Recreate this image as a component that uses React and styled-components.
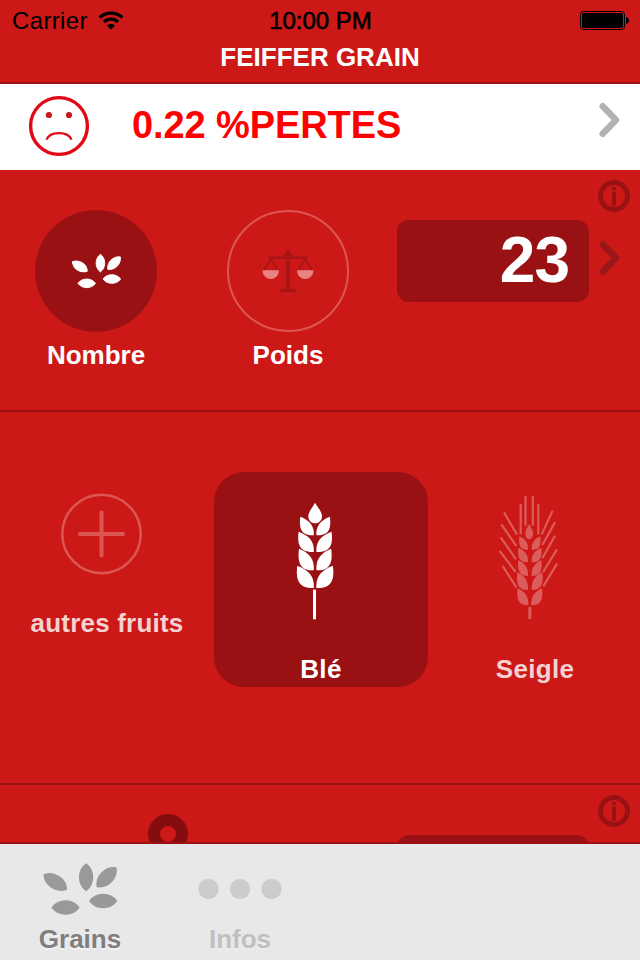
import React from "react";
import styled, { createGlobalStyle } from "styled-components";

const RED = "#cc1917";
const DARK = "#9a1113";

const GlobalStyle = createGlobalStyle`
  *, *::before, *::after { box-sizing: border-box; }
  body { margin: 0; background: ${RED}; }
  svg { display: block; flex: none; }
`;

const Screen = styled.div`
  width: 640px;
  height: 960px;
  overflow: hidden;
  display: flex;
  flex-direction: column;
  background: ${RED};
  font-family: "Liberation Sans", Arial, sans-serif;
  color: #fff;
`;

const Header = styled.header`
  flex: none;
  height: 84px;
  border-bottom: 2px solid ${DARK};
`;

const StatusBar = styled.div`
  display: grid;
  grid-template-columns: 1fr auto 1fr;
  height: 41px;
  padding: 0 11px 0 12px;
  align-items: center;
  line-height: 41px;
  font-size: 24px;
  color: #000;
`;

const Carrier = styled.div`
  display: flex;
  align-items: center;
  gap: 10px;
  letter-spacing: 0.35px;
`;

const Clock = styled.div`
  -webkit-text-stroke: 0.6px #000;
`;

const BatterySlot = styled.div`
  display: flex;
  justify-content: flex-end;
`;

const Title = styled.h1`
  margin: 0;
  font-size: 26px;
  line-height: 32px;
  font-weight: bold;
  text-align: center;
`;

const Banner = styled.section`
  flex: none;
  display: flex;
  align-items: center;
  height: 86px;
  padding: 0 20px 2px 28px;
  background: #fff;
`;

const LossText = styled.div`
  flex: 1;
  margin-left: 42px;
  padding-bottom: 2px;
  color: #fe0000;
  font-size: 38px;
  font-weight: bold;
  line-height: 80px;
  letter-spacing: -0.1px;
  white-space: nowrap;
`;

const ChevronSlot = styled.div`
  margin-bottom: ${(p) => p.$bottom || 0}px;
  margin-left: ${(p) => p.$left || 0}px;
`;

const Section = styled.section`
  flex: none;
  display: flex;
  justify-content: space-between;
  height: ${(p) => p.$height}px;
  padding: 10px 10px 0 35px;
  overflow: hidden;
  border-bottom: ${(p) => (p.$last ? "none" : `2px solid ${DARK}`)};
`;

const Choices = styled.div`
  display: flex;
  gap: 70px;
  margin-top: 30px;
`;

const Choice = styled.div`
  width: 122px;
  display: flex;
  flex-direction: column;
  align-items: center;
`;

const Disc = styled.div`
  width: 122px;
  height: 122px;
  flex: none;
  display: flex;
  align-items: center;
  justify-content: center;
  border-radius: 50%;
  background: ${(p) => (p.$selected ? DARK : "transparent")};
  border: ${(p) => (p.$selected ? "none" : "2px solid #db5755")};
`;

const Label = styled.div`
  font-size: 26px;
  font-weight: bold;
  line-height: 30px;
  white-space: nowrap;
  letter-spacing: ${(p) => p.$spacing || 0}px;
  color: ${(p) => p.$color || "#fff"};
  text-shadow: ${(p) => p.$shadow || "none"};
`;

const ChoiceLabel = styled(Label)`
  margin-top: 8px;
`;

const Entry = styled.div`
  display: grid;
  grid-template-columns: 192px 32px;
  grid-template-rows: 32px 82px;
  gap: 8px 9px;
  align-items: center;
`;

const InfoSlot = styled.div`
  grid-column: 2;
`;

const Field = styled.div`
  grid-column: 1;
  height: 82px;
  padding-right: 20px;
  border-radius: 12px;
  background: ${DARK};
  text-align: right;
  font-size: 64px;
  font-weight: bold;
  line-height: 81px;
  letter-spacing: -1px;
`;

const Carousel = styled.section`
  flex: none;
  height: 373px;
  padding-top: 60px;
  display: grid;
  grid-template-columns: repeat(3, 214px);
  overflow: hidden;
  border-bottom: 2px solid ${DARK};
`;

const Fruit = styled.div`
  height: 215px;
  padding-top: ${(p) => p.$top}px;
  display: flex;
  flex-direction: column;
  align-items: center;
  border-radius: 30px;
  background: ${(p) => (p.$selected ? DARK : "transparent")};
  svg { margin-right: 12px; }
`;

const FruitLabel = styled(Label)`
  margin-top: ${(p) => p.$gap}px;
`;

const PinSlot = styled.div`
  margin: 19px 0 0 113px;
`;

const TabBar = styled.nav`
  flex: none;
  display: flex;
  height: 118px;
  background: #e8e8e8;
  border-top: 2px solid ${DARK};
`;

const Tab = styled.div`
  width: 160px;
  padding-top: 18px;
  display: flex;
  flex-direction: column;
  align-items: center;
`;

const TabIcon = styled.div`
  height: 54px;
  display: flex;
  align-items: center;
`;

const TabLabel = styled(Label)`
  margin-top: 8px;
`;

const SEED = "M-13.2 0C-7 -8.6 7 -8.6 13.2 0C7 8.6 -7 8.6 -13.2 0Z";

function Seeds({ color, scale = 1 }) {
  const seeds = [
    [13.3, 20, 32],
    [44.1, 15.2, 90],
    [64.6, 15.2, -45],
    [23.6, 45.5, 0],
    [61.2, 39, 0],
  ];
  return (
    <svg width={76 * scale} height={54 * scale} viewBox="0 0 76 54" fill={color} stroke={color} strokeWidth="1.4" strokeLinejoin="round">
      {seeds.map(([x, y, r]) => (
        <path key={x} d={SEED} transform={`translate(${x} ${y}) rotate(${r})`} />
      ))}
    </svg>
  );
}

function Wifi() {
  return (
    <svg width="26" height="20" viewBox="0 0 26 20" fill="none" stroke="#000" strokeWidth="3.4">
      <path d="M1.6 6.6C8 .6 18 .6 24.4 6.6" />
      <path d="M6 11C10 7.200 16 7.200 20 11" />
      <path d="M13 18.800L8.900 14.600C11.200 12.300 14.800 12.300 17.100 14.600Z" fill="#000" stroke="none" />
    </svg>
  );
}

function Battery() {
  return (
    <svg width="49" height="19" viewBox="0 0 49 19">
      <rect x=".5" y=".5" width="44" height="18" rx="3" fill="none" stroke="#000" />
      <rect x="2" y="2" width="41" height="15" rx="1.800" />
      <path d="M46 6C50 6.500 50 12.500 46 13Z" />
    </svg>
  );
}

function SadFace() {
  return (
    <svg width="62" height="62" viewBox="0 0 62 62" fill="none" stroke="#e20714">
      <circle cx="31" cy="31" r="28.400" strokeWidth="3.400" />
      <circle cx="20.900" cy="20" r="3.100" fill="#c41a20" stroke="none" />
      <circle cx="41" cy="20" r="3.100" fill="#c41a20" stroke="none" />
      <path d="M18.500 44.600C22 35.900 40 35.900 43.500 44.600" strokeWidth="2.400" />
    </svg>
  );
}

function Chevron({ color }) {
  return (
    <svg width="21" height="36" viewBox="0 0 21 36" fill="none" stroke={color} strokeWidth="6.500" strokeLinecap="round" strokeLinejoin="round">
      <path d="M3.700 4.300L17 18L3.700 31.700" />
    </svg>
  );
}

function Info() {
  return (
    <svg width="32" height="32" viewBox="0 0 32 32" fill={DARK}>
      <circle cx="16" cy="16" r="13.500" fill="none" stroke={DARK} strokeWidth="5" />
      <rect x="14" y="7" width="4" height="3.300" />
      <rect x="14" y="11.700" width="4" height="14.300" />
    </svg>
  );
}

function Scales() {
  return (
    <svg width="52" height="44" viewBox="0 0 52 44" fill="#a91515">
      <path d="M6.300 7.400H20C22 7.400 21.500 5.200 23 4.500C24 .3 28 .3 29 4.500C30.500 5.200 30 7.400 32 7.400H45.700V10H6.300Z" />
      <path d="M24 6H28V41H24ZM17 43.300C17 41 18.500 39.800 20.500 39.800H31.500C33.500 39.800 35 41 35 43.300Z" />
      <path d="M2.300 20.500L8.900 10L15.600 20.500M36.400 20.500L43.100 10L49.700 20.500" fill="none" stroke="#a91515" strokeWidth="2" />
      <path d="M.5 21.300H17A8.250 8.600 0 0 1 .5 21.300ZM35 21.300H51.500A8.250 8.600 0 0 1 35 21.300Z" fill="#e78483" />
    </svg>
  );
}

function Plus() {
  return (
    <svg width="81" height="82" viewBox="0 0 81 82" fill="none" stroke="#dc5654">
      <circle cx="40.500" cy="41" r="39.200" strokeWidth="2.500" />
      <path d="M19 41H62M40.500 19.500V62.500" strokeWidth="4" strokeLinecap="round" />
    </svg>
  );
}

const leaf = (x0, y0, x1, y1) => {
  const w = x1 - x0;
  const h = y1 - y0;
  const pt = (a, b) => `${x0 + w * a} ${y0 + h * b}`;
  return `M${pt(0, 0)}C${pt(0.64, 0.18)} ${pt(1.05, 0.45)} ${pt(1, 1)}C${pt(0.25, 1)} ${pt(-0.15, 0.8)} ${pt(0, 0)}Z`;
};

function Leaves({ rows, axis }) {
  return rows.flatMap(([x0, y0, x1, y1]) => [
    <path key={`l${y0}`} d={leaf(x0, y0, x1, y1)} />,
    <path key={`r${y0}`} d={leaf(2 * axis - x0, y0, 2 * axis - x1, y1)} />,
  ]);
}

function Wheat() {
  return (
    <svg width="38" height="118" viewBox="48 36 114 354" fill="#fff">
      <path d="M105 38C113 52 126 65 126 79C126 92 117 100 105.500 100C94 100 85 92 85 79C85 65 98 52 105 38Z" />
      <Leaves axis={105.3} rows={[[61, 80, 101.5, 136], [56, 125, 101.5, 186], [57, 176, 101.5, 241], [52, 227, 101.5, 294]]} />
      <rect x="99" y="299" width="9" height="89" />
    </svg>
  );
}

function Rye() {
  return (
    <svg width="60" height="125" viewBox="26 15 180 375" fill="#dc5c5b">
      <path d="M116.500 101C121 112 128 118 128 129C128 140 123 148 116.500 148C110 148 105 140 105 129C105 118 112 112 116.500 101Z" />
      <Leaves axis={118.5} rows={[[87, 139, 113, 180], [84, 173, 113, 217], [84, 210, 113, 258], [81, 247, 113, 300], [82, 295, 114, 346]]} />
      <rect x="114" y="351" width="9" height="36" />
      <path
        fill="none"
        stroke="#dc5c5b"
        strokeWidth="6.5"
        d="M91 42V133M105.500 18V107M127.500 18V107M144 42V133M41 67L80 134M33 103L78 168M31 142L77 208M28 183L76 246M37 228L78 292M187 62L154 133M194 97L156 165M194 137L156 205M200 178L158 246M200 221L159 289"
      />
    </svg>
  );
}

function Ring() {
  return (
    <svg width="40" height="40" viewBox="0 0 40 40">
      <circle cx="20" cy="20" r="14" fill="none" stroke="#850d10" strokeWidth="12" />
    </svg>
  );
}

function Dots() {
  return (
    <svg width="84" height="22" viewBox="0 0 84 22" fill="#ccccca">
      <circle cx="10.500" cy="11" r="10.200" />
      <circle cx="42" cy="11" r="10.200" />
      <circle cx="73.500" cy="11" r="10.200" />
    </svg>
  );
}

export default function App() {
  return (
    <Screen>
      <GlobalStyle />
      <Header>
        <StatusBar>
          <Carrier>
            Carrier
            <Wifi />
          </Carrier>
          <Clock>10:00 PM</Clock>
          <BatterySlot>
            <Battery />
          </BatterySlot>
        </StatusBar>
        <Title>FEIFFER GRAIN</Title>
      </Header>

      <Banner>
        <SadFace />
        <LossText>0.22 %PERTES</LossText>
        <ChevronSlot $bottom={12}>
          <Chevron color="#b2b2b0" />
        </ChevronSlot>
      </Banner>

      <Section $height={242}>
        <Choices>
          <Choice>
            <Disc $selected>
              <Seeds color="#fff" scale={0.667} />
            </Disc>
            <ChoiceLabel>Nombre</ChoiceLabel>
          </Choice>
          <Choice>
            <Disc>
              <Scales />
            </Disc>
            <ChoiceLabel>Poids</ChoiceLabel>
          </Choice>
        </Choices>
        <Entry>
          <InfoSlot>
            <Info />
          </InfoSlot>
          <Field>23</Field>
          <ChevronSlot $bottom={6} $left={1}>
            <Chevron color="#98181a" />
          </ChevronSlot>
        </Entry>
      </Section>

      <Carousel>
        <Fruit $top={21}>
          <Plus />
          <FruitLabel $gap={33} $spacing={0.2} $color="#f5d1d1">autres fruits</FruitLabel>
        </Fruit>
        <Fruit $selected $top={30}>
          <Wheat />
          <FruitLabel $gap={34} $spacing={0.4}>Blé</FruitLabel>
        </Fruit>
        <Fruit $top={23}>
          <Rye />
          <FruitLabel $gap={34} $spacing={0.3} $color="#f5d1d1">Seigle</FruitLabel>
        </Fruit>
      </Carousel>

      <Section $height={57} $last>
        <PinSlot>
          <Ring />
        </PinSlot>
        <Entry>
          <InfoSlot>
            <Info />
          </InfoSlot>
          <Field />
        </Entry>
      </Section>

      <TabBar>
        <Tab>
          <TabIcon>
            <Seeds color="#999" />
          </TabIcon>
          <TabLabel $color="#7f7f7f" $shadow="0 2px 1px #f3f3f3">Grains</TabLabel>
        </Tab>
        <Tab>
          <TabIcon>
            <Dots />
          </TabIcon>
          <TabLabel $color="#bfbfbf" $shadow="0 2px 1px #efefef">Infos</TabLabel>
        </Tab>
      </TabBar>
    </Screen>
  );
}
